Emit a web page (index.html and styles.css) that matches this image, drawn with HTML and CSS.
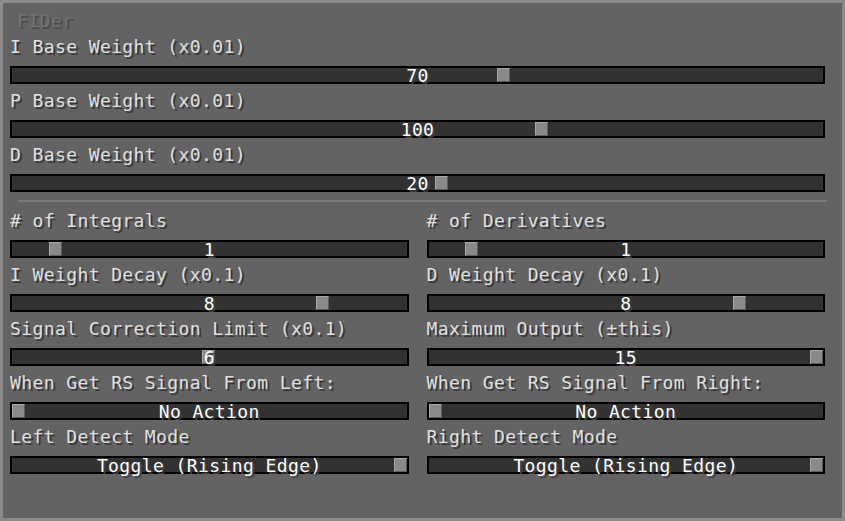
FILE: index.html
```html
<!DOCTYPE html>
<html lang="en">
<head>
    <meta charset="UTF-8">
    <title>FIDer</title>
    <link rel="stylesheet" href="styles.css">
</head>
<body>
    <div class="panel">
        <div class="title">FIDer</div>

        <div class="field">
            <div class="label">I Base Weight (x0.01)</div>
            <div class="slider"><span class="knob" style="left: 485px"></span><span class="value">70</span></div>
        </div>
        <div class="field">
            <div class="label">P Base Weight (x0.01)</div>
            <div class="slider"><span class="knob" style="left: 523px"></span><span class="value">100</span></div>
        </div>
        <div class="field">
            <div class="label">D Base Weight (x0.01)</div>
            <div class="slider"><span class="knob" style="left: 423px"></span><span class="value">20</span></div>
        </div>

        <div class="divider"></div>

        <div class="columns">
            <div class="column">
                <div class="field">
                    <div class="label"># of Integrals</div>
                    <div class="slider"><span class="knob" style="left: 37px"></span><span class="value">1</span></div>
                </div>
                <div class="field">
                    <div class="label">I Weight Decay (x0.1)</div>
                    <div class="slider"><span class="knob" style="left: 304px"></span><span class="value">8</span></div>
                </div>
                <div class="field">
                    <div class="label">Signal Correction Limit (x0.1)</div>
                    <div class="slider"><span class="knob" style="left: 190px"></span><span class="value">6</span></div>
                </div>
                <div class="field">
                    <div class="label">When Get RS Signal From Left:</div>
                    <div class="slider"><span class="knob knob-start"></span><span class="value">No Action</span></div>
                </div>
                <div class="field">
                    <div class="label">Left Detect Mode</div>
                    <div class="slider"><span class="knob knob-end"></span><span class="value">Toggle (Rising Edge)</span></div>
                </div>
            </div>
            <div class="column">
                <div class="field">
                    <div class="label"># of Derivatives</div>
                    <div class="slider"><span class="knob" style="left: 36px"></span><span class="value">1</span></div>
                </div>
                <div class="field">
                    <div class="label">D Weight Decay (x0.1)</div>
                    <div class="slider"><span class="knob" style="left: 304px"></span><span class="value">8</span></div>
                </div>
                <div class="field">
                    <div class="label">Maximum Output (&plusmn;this)</div>
                    <div class="slider"><span class="knob knob-end"></span><span class="value">15</span></div>
                </div>
                <div class="field">
                    <div class="label">When Get RS Signal From Right:</div>
                    <div class="slider"><span class="knob knob-start"></span><span class="value">No Action</span></div>
                </div>
                <div class="field">
                    <div class="label">Right Detect Mode</div>
                    <div class="slider"><span class="knob knob-end"></span><span class="value">Toggle (Rising Edge)</span></div>
                </div>
            </div>
        </div>
    </div>
</body>
</html>
```

FILE: styles.css
```css
html, body {
    margin: 0;
    padding: 0;
    background: #636363;
}
body {
    font-family: "DejaVu Sans Mono", "Liberation Mono", monospace;
    font-size: 18px;
    letter-spacing: 0.4px;
}
.panel {
    box-sizing: border-box;
    width: 845px;
    height: 521px;
    border: 3px solid #8b8b8b;
    border-right-width: 3px;
    background: #636363;
    padding: 9px 17px 0 7px;
}
.title {
    line-height: 18px;
    height: 18px;
    padding-left: 7px;
    margin-bottom: 8px;
    color: #727272;
    text-shadow: 2px 2px 0 #4c4c4c;
}
.field {
    margin-bottom: 8px;
}
.label {
    line-height: 18px;
    height: 18px;
    margin-bottom: 10px;
    color: #e0e0e0;
    text-shadow: 2px 2px 0 #383838;
    white-space: nowrap;
}
/* dark track with a black frame, value text over the knob */
.slider {
    position: relative;
    box-sizing: border-box;
    height: 18px;
    border: 2px solid #000;
    background: #323232;
    text-align: center;
    line-height: 14px;
}
.knob {
    position: absolute;
    top: 0;
    width: 13px;
    height: 14px;
    box-sizing: border-box;
    background: #8a8a8a;
    border-top: 1px solid #a8a8a8;
    border-left: 1px solid #a8a8a8;
    border-right: 1px solid #5c5c5c;
    border-bottom: 1px solid #5c5c5c;
}
.knob-start {
    left: 0;
}
.knob-end {
    right: 0;
}
.value {
    position: relative;
    top: 1px;
    color: #fff;
    text-shadow: 2px 2px 0 #3f3f3f;
    white-space: nowrap;
}
.divider {
    height: 2px;
    background: #7b7b7b;
    margin: 0 -2px 10px 8px;
}
.columns {
    display: grid;
    grid-template-columns: 1fr 1fr;
    column-gap: 18px;
}
```
